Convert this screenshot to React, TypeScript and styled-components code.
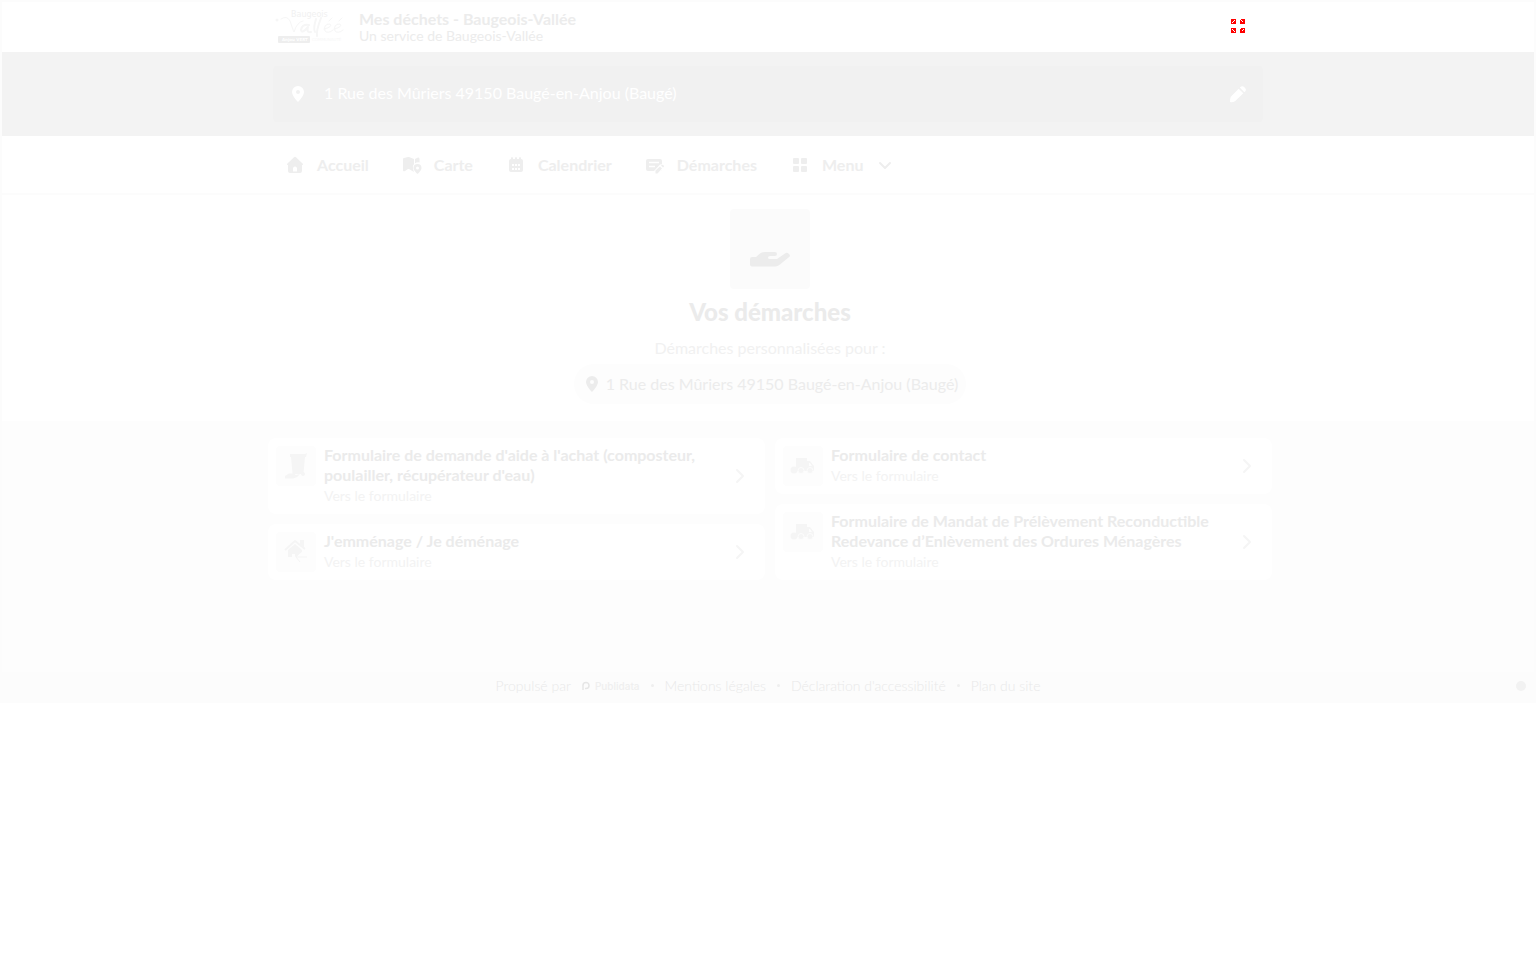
import React from 'react';
import styled, { createGlobalStyle } from 'styled-components';

const GlobalStyle = createGlobalStyle`
  *, *::before, *::after { box-sizing: border-box; }
  body {
    margin: 0;
    background: #ffffff;
    color: #ececec;
    font-family: Lato, "Liberation Sans", sans-serif;
    font-size: 16px;
    line-height: 20px;
  }
  a { color: inherit; text-decoration: none; }
  button { font: inherit; color: inherit; border: 0; background: none; padding: 0; cursor: pointer; }
  svg { display: block; flex: none; }
  h1, h2, p, ul { margin: 0; padding: 0; }
  ul { list-style: none; }
`;

const Page = styled.div`
  border: 2px solid #fcfcfc;
  border-bottom: 0;
`;

const Container = styled.div`
  width: 100%;
  max-width: 990px;
  margin: 0 auto;
`;

const Header = styled.header`
  height: 50px;
`;

const HeaderRow = styled(Container)`
  display: flex;
  align-items: center;
  justify-content: space-between;
  height: 100%;
  padding: 0 18px 2px 2px;
`;

const Brand = styled.a`
  display: flex;
  align-items: center;
  gap: 14px;
  padding-top: 2px;
`;

const BrandTitle = styled.span`
  display: block;
  font-weight: 700;
  line-height: 18px;
`;

const BrandSubtitle = styled.span`
  display: block;
  font-size: 14px;
  line-height: 16px;
`;

const AddressBand = styled.section`
  background: #f3f3f3;
  padding: 14px 0;
`;

const AddressButton = styled.button`
  display: flex;
  align-items: center;
  width: 100%;
  height: 56px;
  padding: 0 16px 0 15px;
  border-radius: 4px;
  background: #f1f1f1;
  color: #ffffff;
`;

const AddressText = styled.span`
  flex: 1;
  margin-left: 16px;
  padding-bottom: 2px;
  text-align: left;
`;

const Nav = styled.nav`
  border-bottom: 2px solid #fcfcfc;
`;

const NavList = styled.ul`
  display: flex;
  gap: 33px;
  height: 57px;
  align-items: center;
  padding-left: 12px;
`;

const NavLink = styled.a`
  display: flex;
  align-items: center;
  gap: 12px;
  font-weight: 700;
  color: #eeeeee;
`;

const Main = styled.main`
  padding-left: 4px;
`;

const Hero = styled.section`
  display: flex;
  flex-direction: column;
  align-items: center;
  padding: 14px 0 17px;
`;

const HeroTile = styled.div`
  display: grid;
  place-items: center;
  width: 80px;
  height: 80px;
  border-radius: 4px;
  background: #fbfbfb;
`;

const HeroTitle = styled.h1`
  margin-top: 7px;
  font-size: 24px;
  line-height: 32px;
  font-weight: 900;
  color: #ebebeb;
`;

const HeroText = styled.p`
  margin-top: 10px;
  color: #f1f1f1;
`;

const AddressPill = styled.p`
  display: flex;
  align-items: center;
  gap: 4px;
  height: 40px;
  margin-top: 6px;
  padding: 0 8px;
  border-radius: 20px;
  background: #fdfdfd;
`;

const ListBand = styled.section`
  background: #fdfdfd;
  margin-left: -4px;
  padding: 17px 0 92px 4px;
`;

const Columns = styled.div`
  display: grid;
  grid-template-columns: 1fr 1fr;
  align-items: start;
  gap: 10px;
  width: 100%;
  max-width: 1004px;
  margin: 0 auto;
`;

const Column = styled.ul`
  display: grid;
  gap: 10px;
`;

const Card = styled.a`
  display: flex;
  align-items: flex-start;
  gap: 8px;
  padding: 8px 20px 8px 8px;
  border-radius: 8px;
  background: #ffffff;
`;

const CardTile = styled.span`
  display: grid;
  place-items: center;
  width: 40px;
  height: 40px;
  border-radius: 4px;
  background: #fdfdfd;
  color: #f5f5f5;
`;

const CardBody = styled.div`
  flex: 1;
  min-width: 0;
  margin-top: -1px;
  padding-right: 16px;
`;

const CardTitle = styled.h2`
  font-size: 16px;
  line-height: 20px;
  font-weight: 700;
  color: #ebebeb;
`;

const CardText = styled.p`
  margin-top: 1px;
  font-size: 14px;
  line-height: 20px;
  color: #f3f3f3;
`;

const CardArrow = styled.span`
  align-self: center;
  color: #f5f5f5;
`;

const Footer = styled.footer`
  display: grid;
  grid-template-columns: 1fr auto 1fr;
  align-items: center;
  height: 31px;
  padding: 0 8px 4px;
  background: #fcfcfc;
  font-size: 14px;
`;

const FooterList = styled.ul`
  grid-column: 2;
  display: flex;
  align-items: center;
  gap: 11px;
  font-weight: 300;
  color: #e9e9e9;
`;

const FooterItem = styled.li`
  display: flex;
  align-items: center;
  gap: 11px;
`;

const Dot = styled.span`
  width: 3px;
  height: 3px;
  border-radius: 50%;
  background: #efefef;
`;

const Publidata = styled.a`
  display: flex;
  align-items: center;
  gap: 5px;
  font-family: Inter, sans-serif;
  font-size: 10px;
  font-weight: 500;
  color: #efefef;
`;

const CookieButton = styled.button`
  justify-self: end;
  width: 10px;
  height: 10px;
  border-radius: 50%;
  background: #f2f2f2;
`;

type Glyph = { size?: number };

const Logo = () => (
  <svg width="70" height="36" viewBox="0 0 70 36" role="img" aria-label="Baugeois-Vallée" fill="none">
    <text x="16" y="8" fill="#f1f1f1" fontFamily="DejaVu Sans" fontSize="8">Baugeois</text>
    <g stroke="#f6f6f6" strokeLinecap="round" strokeLinejoin="round">
      <path d="M6 10Q12 6 15 12Q18 21 19 23Q22 13 28 12" strokeWidth="1" />
      <path d="M34 16Q27 15 26 21Q27 25 33 18Q31 24 36 23" strokeWidth="2" />
      <path d="M41 10Q38 20 40 23M46 9Q41 22 42 27" strokeWidth="2" />
      <path d="M49 20Q58 18 55 15Q48 15 50 22Q53 25 58 21M59 20Q68 18 65 15Q58 15 60 22Q63 25 68 21M54 12L57 9M64 12L67 9" strokeWidth="1" />
    </g>
    <circle cx="2" cy="11" r="1.5" fill="#f6f6f6" />
    <rect x="3" y="27" width="32" height="7" rx="1" fill="#eeeeee" />
    <text x="7" y="32" fill="#ffffff" fontFamily="DejaVu Sans" fontSize="4" fontWeight="700">Anjou VERT</text>
    <text x="37" y="32" fill="#f7f7f7" fontFamily="DejaVu Sans" fontSize="4">COMMUNAUTÉ</text>
  </svg>
);

const FullscreenIcon = () => (
  <svg width="14" height="14" viewBox="0 0 14 14" shapeRendering="crispEdges" aria-hidden="true">
    <path fill="#ff0000" d="M0 0h5v5H0zM9 0h5v5H9zM0 9h5v5H0zM9 9h5v5H9z" />
    <path fill="#ffffff" d="M3 1h1v1h-1zM2 2h1v1h-1zM1 3h1v1h-1zM9 0h1v1h-1zM10 1h1v1h-1zM11 2h1v1h-1zM1 10h1v1h-1zM2 11h1v1h-1zM3 12h1v1h-1zM12 10h1v1h-1zM11 11h1v1h-1zM9 9h1v1h-1z" />
  </svg>
);

const PinIcon = ({ size = 20 }: Glyph) => (
  <svg width={size} height={size} viewBox="0 0 20 20" fill="currentColor" fillRule="evenodd" aria-hidden="true">
    <path d="M10 2a6 6 0 0 1 6 6c0 4-6 10-6 10S4 12 4 8a6 6 0 0 1 6-6Zm0 4a2 2 0 1 0 0 4 2 2 0 0 0 0-4Z" />
  </svg>
);

const PencilIcon = () => (
  <svg width="18" height="18" viewBox="0 0 18 18" fill="currentColor" aria-hidden="true">
    <path d="M9.700 3.700 14.300 8.300 6 16.300Q3.500 17.500 1 17Q.700 14.500 1.800 11.800ZM10.800 2.600 12.200 1.400Q13.500.700 15 1.800L16.400 3.400Q17.500 4.800 16.500 6L15.400 7.200Z" />
  </svg>
);

const HomeIcon = () => (
  <svg width="20" height="20" viewBox="0 0 20 20" fill="currentColor" fillRule="evenodd" aria-hidden="true">
    <path d="M9 2.200Q10 1.300 11 2.200L17.800 8.700Q18.700 10 17 10V16Q17 18 15 18H5Q3 18 3 16V10Q1.300 10 2.200 8.700ZM10 11.500Q8 11.500 8 13.500V16.500H12V13.500Q12 11.500 10 11.500Z" />
  </svg>
);

const MapIcon = () => (
  <svg width="20" height="20" viewBox="0 0 20 20" fill="currentColor" fillRule="evenodd" aria-hidden="true">
    <path d="M1 4Q1 3 2 3L6 2V14L3 16Q1 17 1 15ZM7 2 12 4V9Q10 11 11 14L12 17 7 14ZM6 2H7V14H6ZM13 4 16 2.500Q17.500 2 17.500 4V7.500Q15 7 13 8.300Z" />
    <path d="M15.500 9a4 4 0 0 1 4 4c0 2.500-4 6-4 6s-4-3.500-4-6a4 4 0 0 1 4-4Zm0 2.500a1.500 1.500 0 1 0 0 3 1.500 1.500 0 0 0 0-3Z" />
  </svg>
);

const CalendarIcon = () => (
  <svg width="20" height="20" viewBox="0 0 20 20" fill="currentColor" fillRule="evenodd" aria-hidden="true">
    <path d="M5 4V3Q6 1 7 3V4H9V3Q10 1 11 3V4H13V3Q14 1 15 3V4Q17 4 17 6V7H3V6Q3 4 5 4ZM3 8H17V15Q17 17 15 17H5Q3 17 3 15ZM6 9V11H8V9ZM9 9V11H11V9ZM12 9V11H14V9ZM6 13V15H8V13ZM9 13V15H11V13ZM12 13V15H14V13Z" />
    <path d="M3 7H17V8H3Z" />
  </svg>
);

const FormIcon = () => (
  <svg width="20" height="20" viewBox="0 0 20 20" fill="none" aria-hidden="true">
    <rect x="1" y="4" width="16" height="12" rx="2" fill="currentColor" />
    <path d="M4 7.500H14M4 11.500H10" stroke="#ffffff" strokeWidth="1.500" />
    <path d="M9 20V16L15 9.500 20 9V12L12 20Z" fill="#ffffff" />
    <path d="M10.500 15.500 15 11.500 17 13.500 12.500 18.500H10.500ZM16 10.500 17 9.700Q19 9.500 19 11.500L18 12.500Z" fill="currentColor" />
  </svg>
);

const GridIcon = () => (
  <svg width="20" height="20" viewBox="0 0 20 20" fill="currentColor" aria-hidden="true">
    <rect x="3" y="3" width="6" height="6" rx="1" />
    <rect x="11" y="3" width="6" height="6" rx="1" />
    <rect x="3" y="11" width="6" height="6" rx="1" />
    <rect x="11" y="11" width="6" height="6" rx="1" />
  </svg>
);

const ChevronDown = () => (
  <svg width="20" height="20" viewBox="0 0 20 20" fill="none" stroke="currentColor" strokeWidth="2" strokeLinecap="round" strokeLinejoin="round" aria-hidden="true">
    <path d="m5 8 5 5 5-5" />
  </svg>
);

const ChevronRight = () => (
  <svg width="10" height="16" viewBox="0 0 10 16" fill="none" stroke="currentColor" strokeWidth="2" strokeLinecap="round" strokeLinejoin="round" aria-hidden="true">
    <path d="m2 2 6 6-6 6" />
  </svg>
);

const HandIcon = () => (
  <svg width="42" height="42" viewBox="0 0 42 42" fill="currentColor" aria-hidden="true">
    <path d="M3 29H7L11 25.500Q13 24 16 24H26Q28 24 28 26T26 28H21Q19 28 19 29.500T21 31H28L36 25.500Q38 24 40 26T39.500 29.500L31 36.500Q28.500 38.500 26 38.500H3Q1 38.500 1 36.500V31Q1 29 3 29Z" />
  </svg>
);

const BinIcon = () => (
  <svg width="28" height="28" viewBox="0 0 28 28" fill="currentColor" aria-hidden="true">
    <path d="M8 2H23L25 1 24 5H8ZM9 5H23L21.500 22H10.500Z" />
    <circle cx="21" cy="22" r="2" />
    <path d="M3 24 7 21.500H12L14 23 18 22 15 25 11 26.500H3Z" />
  </svg>
);

const HouseArrowIcon = () => (
  <svg width="28" height="28" viewBox="0 0 28 28" fill="none" stroke="currentColor" aria-hidden="true">
    <path d="M3 12 13 3 23 11M19 7V3H21V9" strokeWidth="2" />
    <path d="M6 12 13 6 20 12V14L13 19V16H10V19H6Z" fill="currentColor" stroke="none" />
    <path d="M25 19H14M18 14 14 19 18 24" strokeWidth="1" />
  </svg>
);

const TruckIcon = () => (
  <svg width="28" height="28" viewBox="0 0 28 28" fill="currentColor" fillRule="evenodd" aria-hidden="true">
    <path d="M7 6H18V9H21L25 14V19H7ZM20 11V14H23L21 11Z" />
    <circle cx="5" cy="18" r="3.500" />
    <g stroke="#fdfdfd" strokeWidth="1">
      <circle cx="12" cy="18.500" r="3" />
      <circle cx="21" cy="18.500" r="3" />
    </g>
  </svg>
);

const PublidataMark = () => (
  <svg width="8" height="10" viewBox="0 0 8 10" fill="none" stroke="#e6e6e6" strokeWidth="1.500" aria-hidden="true">
    <path d="M1 9V4.500A3 3 0 1 1 4 7.500H3" />
  </svg>
);

const navItems = [
  { label: 'Accueil', icon: <HomeIcon /> },
  { label: 'Carte', icon: <MapIcon /> },
  { label: 'Calendrier', icon: <CalendarIcon /> },
  { label: 'Démarches', icon: <FormIcon /> },
];

const columns = [
  [
    { title: "Formulaire de demande d'aide à l'achat (composteur, poulailler, récupérateur d'eau)", icon: <BinIcon /> },
    { title: "J'emménage / Je déménage", icon: <HouseArrowIcon /> },
  ],
  [
    { title: 'Formulaire de contact', icon: <TruckIcon /> },
    { title: 'Formulaire de Mandat de Prélèvement Reconductible Redevance d’Enlèvement des Ordures Ménagères', icon: <TruckIcon /> },
  ],
];

const address = '1 Rue des Mûriers 49150 Baugé-en-Anjou (Baugé)';

export default function App() {
  return (
    <Page>
      <GlobalStyle />
      <Header>
        <HeaderRow>
          <Brand href="#">
            <Logo />
            <span>
              <BrandTitle>Mes déchets - Baugeois-Vallée</BrandTitle>
              <BrandSubtitle>Un service de Baugeois-Vallée</BrandSubtitle>
            </span>
          </Brand>
          <button type="button" aria-label="Plein écran">
            <FullscreenIcon />
          </button>
        </HeaderRow>
      </Header>
      <AddressBand>
        <Container>
          <AddressButton type="button">
            <PinIcon />
            <AddressText>{address}</AddressText>
            <PencilIcon />
          </AddressButton>
        </Container>
      </AddressBand>
      <Nav>
        <Container>
          <NavList>
            {navItems.map((item) => (
              <li key={item.label}>
                <NavLink href="#">
                  {item.icon}
                  {item.label}
                </NavLink>
              </li>
            ))}
            <li>
              <NavLink as="button" type="button">
                <GridIcon />
                Menu
                <ChevronDown />
              </NavLink>
            </li>
          </NavList>
        </Container>
      </Nav>
      <Main>
        <Hero>
          <HeroTile>
            <HandIcon />
          </HeroTile>
          <HeroTitle>Vos démarches</HeroTitle>
          <HeroText>Démarches personnalisées pour :</HeroText>
          <AddressPill>
            <PinIcon />
            {address}
          </AddressPill>
        </Hero>
        <ListBand>
          <Columns>
            {columns.map((cards, index) => (
              <Column key={index}>
                {cards.map((card) => (
                  <li key={card.title}>
                    <Card href="#">
                      <CardTile>{card.icon}</CardTile>
                      <CardBody>
                        <CardTitle>{card.title}</CardTitle>
                        <CardText>Vers le formulaire</CardText>
                      </CardBody>
                      <CardArrow>
                        <ChevronRight />
                      </CardArrow>
                    </Card>
                  </li>
                ))}
              </Column>
            ))}
          </Columns>
        </ListBand>
      </Main>
      <Footer>
        <FooterList>
          <FooterItem>
            Propulsé par
            <Publidata href="#">
              <PublidataMark />
              Publidata
            </Publidata>
          </FooterItem>
          {['Mentions légales', "Déclaration d'accessibilité", 'Plan du site'].map((label) => (
            <FooterItem key={label}>
              <Dot />
              <a href="#">{label}</a>
            </FooterItem>
          ))}
        </FooterList>
        <CookieButton type="button" aria-label="Gestion des cookies" />
      </Footer>
    </Page>
  );
}
